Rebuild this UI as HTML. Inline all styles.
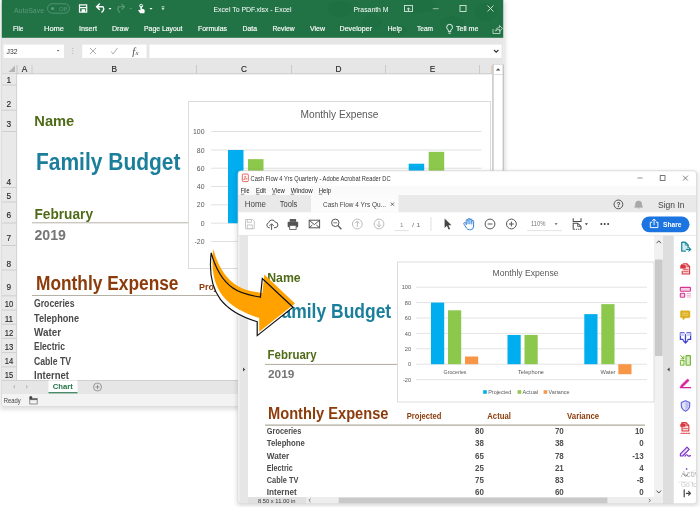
<!DOCTYPE html>
<html><head><meta charset="utf-8"><title>Excel To PDF</title>
<style>
html,body{margin:0;padding:0;background:#fff;}
body{width:700px;height:507px;overflow:hidden;}
svg{display:block;will-change:transform;font-family:"Liberation Sans",sans-serif;}
</style></head><body>
<svg width="700" height="507" viewBox="0 0 700 507">
<defs>
<filter id="sh" x="-5%" y="-5%" width="110%" height="110%"><feGaussianBlur stdDeviation="2.2"/></filter>
</defs>
<rect x="0.5" y="1" width="505.0" height="408.5" fill="#000" opacity="0.13" filter="url(#sh)"/>
<clipPath id="ecl"><rect x="1.5" y="-3" width="502.0" height="409.5" rx="2.5"/></clipPath>
<g clip-path="url(#ecl)">
<rect x="1.5" y="0" width="502.0" height="406.5" fill="#ffffff" />
<rect x="1.5" y="0" width="502.0" height="38" fill="#217346" />
<g fill="#1b6a3e" opacity="0.4"><ellipse cx="340" cy="9" rx="13" ry="8"/><ellipse cx="372" cy="22" rx="10" ry="7"/><ellipse cx="420" cy="6" rx="16" ry="7"/><ellipse cx="452" cy="24" rx="12" ry="8"/><ellipse cx="486" cy="12" rx="11" ry="9"/><ellipse cx="398" cy="30" rx="9" ry="5"/></g>
<text x="14" y="12.5" font-size="7.6" fill="#5c9a78" font-weight="normal" text-anchor="start" textLength="30" lengthAdjust="spacingAndGlyphs" >AutoSave</text>
<rect x="47.5" y="3.8" width="22" height="9.4" rx="4.7" fill="none" stroke="#5c9a78" stroke-width="0.8"/>
<circle cx="52.5" cy="8.5" r="1.6" fill="#5c9a78"/>
<text x="59" y="11" font-size="5.6" fill="#5c9a78" font-weight="normal" text-anchor="start" textLength="8" lengthAdjust="spacingAndGlyphs" >Off</text>
<g stroke="#fff" fill="none" stroke-width="1.2"><rect x="79.5" y="4.9" width="7.2" height="7.2"/><rect x="81.6" y="9.2" width="3.6" height="3" fill="#fff" stroke="none"/><line x1="80" y1="7.6" x2="87" y2="7.6"/></g>
<path d="M97 6.8 L103 6.8 Q105 9.5 101.5 12.6 M99.8 3.6 L96.6 6.8 L99.8 10" stroke="#fff" stroke-width="1.4" fill="none"/>
<path d="M108.5 8 l3 0 l-1.5 1.8z" fill="#fff"/>
<path d="M124 6.8 L118.5 6.8 Q116.5 9.5 120 12.6 M121.6 4 L124.4 6.8 L121.6 9.6" stroke="#5c9a78" stroke-width="1.1" fill="none"/>
<path d="M129.5 8 l2.6 0 l-1.3 1.6z" fill="#5c9a78"/>
<circle cx="141.2" cy="5.8" r="1.5" fill="none" stroke="#fff" stroke-width="0.9"/><path d="M140.4 6 q0.8 -0.6 1.5 0.2 l0 2.6 q3.2 0.4 2.8 2.6 l-0.4 1.8 l-4.2 0 l-2 -3 q1 -0.8 2.3 0.3z" fill="#fff"/>
<path d="M149.5 8 l3 0 l-1.5 1.8z" fill="#fff"/>
<path d="M161.5 8.2 l3 0 l-1.5 1.8z M161.6 6.4 h2.8 v0.9 h-2.8z" fill="#fff"/>
<text x="213.5" y="12.3" font-size="7.3" fill="#fff" font-weight="normal" text-anchor="start" textLength="78" lengthAdjust="spacingAndGlyphs" >Excel To PDF.xlsx  -  Excel</text>
<text x="353.5" y="12.3" font-size="7.3" fill="#fff" font-weight="normal" text-anchor="start" textLength="35" lengthAdjust="spacingAndGlyphs" >Prasanth M</text>
<g stroke="#d7e8dd" fill="none" stroke-width="0.9"><rect x="404.5" y="5.5" width="8" height="6"/><path d="M406.7 9.6 l1.8 -1.8 l1.8 1.8 M408.5 8 v3"/></g>
<line x1="432.8" y1="8.7" x2="438.6" y2="8.7" stroke="#a5c9b4" stroke-width="0.9" />
<rect x="460" y="5.5" width="6" height="6" fill="none" stroke="#d7e8dd" stroke-width="0.9"/>
<path d="M487.5 5.5 l6 6 M493.5 5.5 l-6 6" stroke="#d7e8dd" stroke-width="0.9"/>
<text x="13" y="31.3" font-size="7.4" fill="#fff" font-weight="normal" text-anchor="start" textLength="10.5" lengthAdjust="spacingAndGlyphs" stroke="#fff" stroke-width="0.15">File</text>
<text x="44" y="31.3" font-size="7.4" fill="#fff" font-weight="normal" text-anchor="start" textLength="20" lengthAdjust="spacingAndGlyphs" stroke="#fff" stroke-width="0.15">Home</text>
<text x="79" y="31.3" font-size="7.4" fill="#fff" font-weight="normal" text-anchor="start" textLength="18" lengthAdjust="spacingAndGlyphs" stroke="#fff" stroke-width="0.15">Insert</text>
<text x="112" y="31.3" font-size="7.4" fill="#fff" font-weight="normal" text-anchor="start" textLength="16.5" lengthAdjust="spacingAndGlyphs" stroke="#fff" stroke-width="0.15">Draw</text>
<text x="144" y="31.3" font-size="7.4" fill="#fff" font-weight="normal" text-anchor="start" textLength="38.5" lengthAdjust="spacingAndGlyphs" stroke="#fff" stroke-width="0.15">Page Layout</text>
<text x="198" y="31.3" font-size="7.4" fill="#fff" font-weight="normal" text-anchor="start" textLength="29" lengthAdjust="spacingAndGlyphs" stroke="#fff" stroke-width="0.15">Formulas</text>
<text x="242.5" y="31.3" font-size="7.4" fill="#fff" font-weight="normal" text-anchor="start" textLength="14.5" lengthAdjust="spacingAndGlyphs" stroke="#fff" stroke-width="0.15">Data</text>
<text x="272.5" y="31.3" font-size="7.4" fill="#fff" font-weight="normal" text-anchor="start" textLength="22.0" lengthAdjust="spacingAndGlyphs" stroke="#fff" stroke-width="0.15">Review</text>
<text x="310" y="31.3" font-size="7.4" fill="#fff" font-weight="normal" text-anchor="start" textLength="15" lengthAdjust="spacingAndGlyphs" stroke="#fff" stroke-width="0.15">View</text>
<text x="339.5" y="31.3" font-size="7.4" fill="#fff" font-weight="normal" text-anchor="start" textLength="32.5" lengthAdjust="spacingAndGlyphs" stroke="#fff" stroke-width="0.15">Developer</text>
<text x="387.5" y="31.3" font-size="7.4" fill="#fff" font-weight="normal" text-anchor="start" textLength="14.5" lengthAdjust="spacingAndGlyphs" stroke="#fff" stroke-width="0.15">Help</text>
<text x="417" y="31.3" font-size="7.4" fill="#fff" font-weight="normal" text-anchor="start" textLength="16" lengthAdjust="spacingAndGlyphs" stroke="#fff" stroke-width="0.15">Team</text>
<text x="456" y="31.3" font-size="7.4" fill="#fff" font-weight="normal" text-anchor="start" textLength="22.5" lengthAdjust="spacingAndGlyphs" stroke="#fff" stroke-width="0.15">Tell me</text>
<path d="M448.4 31.6 v-1.4 q-1.7 -1.4 -1.7 -3 a2.9 2.9 0 0 1 5.8 0 q0 1.6 -1.7 3 v1.4z M448.5 33.2 h2.2" stroke="#fff" stroke-width="0.9" fill="none"/>
<path d="M493 29 v4.5 h7 v-3 M495.5 31 q0.5 -3.5 4 -3.6 v-1.9 l3 2.9 l-3 2.9 v-1.9 q-2.5 0 -4 1.6z" stroke="#cfe3d6" stroke-width="0.8" fill="none"/>
<rect x="1.5" y="37.8" width="502.0" height="36.2" fill="#e6e6e6" />
<rect x="3.6" y="44.6" width="60.4" height="13.3" fill="#fff" />
<text x="6.5" y="54" font-size="7.2" fill="#333" font-weight="normal" text-anchor="start" textLength="11" lengthAdjust="spacingAndGlyphs" >J32</text>
<path d="M56.8 50 l2.6 0 l-1.3 1.6z" fill="#555"/>
<rect x="72.3" y="48" width="0.9" height="0.9" fill="#aaa" />
<rect x="72.3" y="50.5" width="0.9" height="0.9" fill="#aaa" />
<rect x="72.3" y="53" width="0.9" height="0.9" fill="#aaa" />
<rect x="82.3" y="44.6" width="64.2" height="13.3" fill="#fff" />
<path d="M90 48 l6 6 M96 48 l-6 6" stroke="#999" stroke-width="0.8"/>
<path d="M111 51.5 l2 2.5 l4.5 -6" stroke="#999" stroke-width="0.8" fill="none"/>
<text x="132.3" y="54.8" font-size="10.4" fill="#4a4a4a" font-weight="normal" text-anchor="start" font-style="italic" font-family="Liberation Serif,serif">f</text>
<text x="135.6" y="55" font-size="6.8" fill="#4a4a4a" font-weight="normal" text-anchor="start" font-style="italic" font-family="Liberation Serif,serif">x</text>
<rect x="149.5" y="44.6" width="352" height="13.3" fill="#fff" />
<path d="M494 50 l2.2 2.2 l2.2 -2.2" stroke="#333" stroke-width="1.1" fill="none"/>
<rect x="1.5" y="62.5" width="502.0" height="11.299999999999997" fill="#e6e6e6" />
<path d="M15 65.5 v6.5 h-6.5z" fill="#b5b5b5"/>
<line x1="1.5" y1="73.8" x2="492.5" y2="73.8" stroke="#c4c4c4" stroke-width="0.8" />
<text x="24.5" y="71.8" font-size="8.3" fill="#222" font-weight="normal" text-anchor="middle" stroke="#222" stroke-width="0.12">A</text>
<line x1="32" y1="65" x2="32" y2="73.8" stroke="#c4c4c4" stroke-width="0.8" />
<text x="114.25" y="71.8" font-size="8.3" fill="#222" font-weight="normal" text-anchor="middle" stroke="#222" stroke-width="0.12">B</text>
<line x1="196.5" y1="65" x2="196.5" y2="73.8" stroke="#c4c4c4" stroke-width="0.8" />
<text x="244.0" y="71.8" font-size="8.3" fill="#222" font-weight="normal" text-anchor="middle" stroke="#222" stroke-width="0.12">C</text>
<line x1="291.5" y1="65" x2="291.5" y2="73.8" stroke="#c4c4c4" stroke-width="0.8" />
<text x="338.5" y="71.8" font-size="8.3" fill="#222" font-weight="normal" text-anchor="middle" stroke="#222" stroke-width="0.12">D</text>
<line x1="385.5" y1="65" x2="385.5" y2="73.8" stroke="#c4c4c4" stroke-width="0.8" />
<text x="432.5" y="71.8" font-size="8.3" fill="#222" font-weight="normal" text-anchor="middle" stroke="#222" stroke-width="0.12">E</text>
<line x1="479.5" y1="65" x2="479.5" y2="73.8" stroke="#c4c4c4" stroke-width="0.8" />
<line x1="17" y1="65" x2="17" y2="73.8" stroke="#b9b9b9" stroke-width="0.8" />
<rect x="491.5" y="66" width="1" height="7.5" fill="#f0b57a" />
<rect x="1.5" y="73.8" width="15" height="306.2" fill="#e9e9e9" />
<line x1="16.6" y1="73.8" x2="16.6" y2="380" stroke="#c6c6c6" stroke-width="0.8" />
<text x="8.9" y="82.8" font-size="8.3" fill="#2a2a2a" font-weight="normal" text-anchor="middle" stroke="#2a2a2a" stroke-width="0.15">1</text>
<line x1="1.5" y1="85" x2="16.6" y2="85" stroke="#c6c6c6" stroke-width="0.8" />
<text x="8.9" y="107.3" font-size="8.3" fill="#2a2a2a" font-weight="normal" text-anchor="middle" stroke="#2a2a2a" stroke-width="0.15">2</text>
<line x1="1.5" y1="110.2" x2="16.6" y2="110.2" stroke="#c6c6c6" stroke-width="0.8" />
<text x="8.9" y="127.1" font-size="8.3" fill="#2a2a2a" font-weight="normal" text-anchor="middle" stroke="#2a2a2a" stroke-width="0.15">3</text>
<line x1="1.5" y1="131.5" x2="16.6" y2="131.5" stroke="#c6c6c6" stroke-width="0.8" />
<text x="8.9" y="185.3" font-size="8.3" fill="#2a2a2a" font-weight="normal" text-anchor="middle" stroke="#2a2a2a" stroke-width="0.15">4</text>
<line x1="1.5" y1="187.5" x2="16.6" y2="187.5" stroke="#c6c6c6" stroke-width="0.8" />
<text x="8.9" y="199" font-size="8.3" fill="#2a2a2a" font-weight="normal" text-anchor="middle" stroke="#2a2a2a" stroke-width="0.15">5</text>
<line x1="1.5" y1="202" x2="16.6" y2="202" stroke="#c6c6c6" stroke-width="0.8" />
<text x="8.9" y="217.8" font-size="8.3" fill="#2a2a2a" font-weight="normal" text-anchor="middle" stroke="#2a2a2a" stroke-width="0.15">6</text>
<line x1="1.5" y1="223" x2="16.6" y2="223" stroke="#c6c6c6" stroke-width="0.8" />
<text x="8.9" y="240.5" font-size="8.3" fill="#2a2a2a" font-weight="normal" text-anchor="middle" stroke="#2a2a2a" stroke-width="0.15">7</text>
<line x1="1.5" y1="245.5" x2="16.6" y2="245.5" stroke="#c6c6c6" stroke-width="0.8" />
<text x="8.9" y="266.9" font-size="8.3" fill="#2a2a2a" font-weight="normal" text-anchor="middle" stroke="#2a2a2a" stroke-width="0.15">8</text>
<line x1="1.5" y1="270" x2="16.6" y2="270" stroke="#c6c6c6" stroke-width="0.8" />
<text x="8.9" y="289.7" font-size="8.3" fill="#2a2a2a" font-weight="normal" text-anchor="middle" stroke="#2a2a2a" stroke-width="0.15">9</text>
<line x1="1.5" y1="295.8" x2="16.6" y2="295.8" stroke="#c6c6c6" stroke-width="0.8" />
<text x="8.9" y="307.4" font-size="8.3" fill="#2a2a2a" font-weight="normal" text-anchor="middle" textLength="8.5" lengthAdjust="spacingAndGlyphs" stroke="#2a2a2a" stroke-width="0.15">10</text>
<line x1="1.5" y1="310" x2="16.6" y2="310" stroke="#c6c6c6" stroke-width="0.8" />
<text x="8.9" y="321.6" font-size="8.3" fill="#2a2a2a" font-weight="normal" text-anchor="middle" textLength="8.5" lengthAdjust="spacingAndGlyphs" stroke="#2a2a2a" stroke-width="0.15">11</text>
<line x1="1.5" y1="324.2" x2="16.6" y2="324.2" stroke="#c6c6c6" stroke-width="0.8" />
<text x="8.9" y="335.8" font-size="8.3" fill="#2a2a2a" font-weight="normal" text-anchor="middle" textLength="8.5" lengthAdjust="spacingAndGlyphs" stroke="#2a2a2a" stroke-width="0.15">12</text>
<line x1="1.5" y1="338.4" x2="16.6" y2="338.4" stroke="#c6c6c6" stroke-width="0.8" />
<text x="8.9" y="350.2" font-size="8.3" fill="#2a2a2a" font-weight="normal" text-anchor="middle" textLength="8.5" lengthAdjust="spacingAndGlyphs" stroke="#2a2a2a" stroke-width="0.15">13</text>
<line x1="1.5" y1="352.6" x2="16.6" y2="352.6" stroke="#c6c6c6" stroke-width="0.8" />
<text x="8.9" y="364.2" font-size="8.3" fill="#2a2a2a" font-weight="normal" text-anchor="middle" textLength="8.5" lengthAdjust="spacingAndGlyphs" stroke="#2a2a2a" stroke-width="0.15">14</text>
<line x1="1.5" y1="366.8" x2="16.6" y2="366.8" stroke="#c6c6c6" stroke-width="0.8" />
<text x="8.9" y="378.4" font-size="8.3" fill="#2a2a2a" font-weight="normal" text-anchor="middle" textLength="8.5" lengthAdjust="spacingAndGlyphs" stroke="#2a2a2a" stroke-width="0.15">15</text>
<text x="34.3" y="126.4" font-size="14.4" fill="#4f6b17" font-weight="bold" text-anchor="start" textLength="40" lengthAdjust="spacingAndGlyphs" >Name</text>
<text x="36" y="169.5" font-size="24.5" fill="#1b7f9c" font-weight="bold" text-anchor="start" textLength="144.5" lengthAdjust="spacingAndGlyphs" >Family Budget</text>
<text x="34.5" y="218.6" font-size="14.6" fill="#4f6b17" font-weight="bold" text-anchor="start" textLength="58.5" lengthAdjust="spacingAndGlyphs" >February</text>
<line x1="32" y1="222.8" x2="196" y2="222.8" stroke="#b5b1a4" stroke-width="1" />
<text x="34.5" y="239.6" font-size="14.4" fill="#757575" font-weight="bold" text-anchor="start" textLength="31.5" lengthAdjust="spacingAndGlyphs" >2019</text>
<text x="36" y="290" font-size="19.4" fill="#8c3b0b" font-weight="bold" text-anchor="start" textLength="142.5" lengthAdjust="spacingAndGlyphs" >Monthly Expense</text>
<line x1="32" y1="295.5" x2="222" y2="295.5" stroke="#b5b1a4" stroke-width="1" />
<text x="199" y="290.2" font-size="9.2" fill="#8c3b0b" font-weight="bold" text-anchor="start" textLength="17.5" lengthAdjust="spacingAndGlyphs" >Proj</text>
<text x="34" y="307.4" font-size="10.1" fill="#4a4a4a" font-weight="bold" text-anchor="start" textLength="40.5" lengthAdjust="spacingAndGlyphs" >Groceries</text>
<text x="34" y="321.75" font-size="10.1" fill="#4a4a4a" font-weight="bold" text-anchor="start" textLength="45" lengthAdjust="spacingAndGlyphs" >Telephone</text>
<text x="34" y="336.09999999999997" font-size="10.1" fill="#4a4a4a" font-weight="bold" text-anchor="start" textLength="27" lengthAdjust="spacingAndGlyphs" >Water</text>
<text x="34" y="350.45" font-size="10.1" fill="#4a4a4a" font-weight="bold" text-anchor="start" textLength="31" lengthAdjust="spacingAndGlyphs" >Electric</text>
<text x="34" y="364.79999999999995" font-size="10.1" fill="#4a4a4a" font-weight="bold" text-anchor="start" textLength="37" lengthAdjust="spacingAndGlyphs" >Cable TV</text>
<text x="34" y="379.15" font-size="10.1" fill="#4a4a4a" font-weight="bold" text-anchor="start" textLength="35" lengthAdjust="spacingAndGlyphs" >Internet</text>
<rect x="188.5" y="101.5" width="302.0" height="167.0" fill="#fff" stroke="#d9d9d9" stroke-width="0.9"/>
<text x="339.5" y="118" font-size="10.6" fill="#595959" font-weight="normal" text-anchor="middle" textLength="78" lengthAdjust="spacingAndGlyphs" >Monthly Expense</text>
<line x1="211" y1="131.5" x2="481.5" y2="131.5" stroke="#d9d9d9" stroke-width="0.8" />
<text x="204.5" y="134.1" font-size="6.9" fill="#595959" font-weight="normal" text-anchor="end" >100</text>
<line x1="211" y1="150" x2="481.5" y2="150" stroke="#d9d9d9" stroke-width="0.8" />
<text x="204.5" y="152.6" font-size="6.9" fill="#595959" font-weight="normal" text-anchor="end" >80</text>
<line x1="211" y1="168.2" x2="481.5" y2="168.2" stroke="#d9d9d9" stroke-width="0.8" />
<text x="204.5" y="170.79999999999998" font-size="6.9" fill="#595959" font-weight="normal" text-anchor="end" >60</text>
<line x1="211" y1="186.5" x2="481.5" y2="186.5" stroke="#d9d9d9" stroke-width="0.8" />
<text x="204.5" y="189.1" font-size="6.9" fill="#595959" font-weight="normal" text-anchor="end" >40</text>
<line x1="211" y1="204.8" x2="481.5" y2="204.8" stroke="#d9d9d9" stroke-width="0.8" />
<text x="204.5" y="207.4" font-size="6.9" fill="#595959" font-weight="normal" text-anchor="end" >20</text>
<line x1="211" y1="223.2" x2="481.5" y2="223.2" stroke="#d9d9d9" stroke-width="0.8" />
<text x="204.5" y="225.79999999999998" font-size="6.9" fill="#595959" font-weight="normal" text-anchor="end" >0</text>
<line x1="211" y1="241.5" x2="481.5" y2="241.5" stroke="#d9d9d9" stroke-width="0.8" />
<text x="204.5" y="244.1" font-size="6.9" fill="#595959" font-weight="normal" text-anchor="end" >-20</text>
<rect x="228" y="150.0" width="15.5" height="73.19999999999999" fill="#00adee" />
<rect x="248" y="159.14999999999998" width="15.5" height="64.05000000000001" fill="#8cc84b" />
<rect x="408.7" y="163.725" width="15.5" height="59.474999999999994" fill="#00adee" />
<rect x="428.7" y="151.82999999999998" width="15.5" height="71.37" fill="#8cc84b" />
<rect x="492.2" y="64.4" width="11.3" height="316" fill="#fff" />
<rect x="492.3" y="64.4" width="1.3" height="316" fill="#bebebe" />
<rect x="493.6" y="64.4" width="9.6" height="10" fill="#fff" stroke="#d0d0d0" stroke-width="0.7"/>
<path d="M495.9 70.6 l2.2 -2.4 l2.2 2.4z" fill="#444"/>
<rect x="1.5" y="380.5" width="502.0" height="13.5" fill="#e6e6e6" />
<line x1="1.5" y1="380.5" x2="503.5" y2="380.5" stroke="#c6c6c6" stroke-width="0.8" />
<path d="M15 384.5 l-2 2.2 l2 2.2z M26 384.5 l2 2.2 l-2 2.2z" fill="#c0c0c0"/>
<rect x="48.5" y="380.5" width="29" height="12" fill="#fff" />
<rect x="48.5" y="392.2" width="29" height="1.1" fill="#217346" />
<text x="52.8" y="389.2" font-size="7.8" fill="#217346" font-weight="bold" text-anchor="start" textLength="20" lengthAdjust="spacingAndGlyphs" >Chart</text>
<circle cx="97.5" cy="387" r="4" fill="none" stroke="#777" stroke-width="0.7"/><path d="M95.3 387 h4.4 M97.5 384.8 v4.4" stroke="#777" stroke-width="0.7"/>
<rect x="1.5" y="394" width="502.0" height="12.5" fill="#f3f3f3" />
<text x="3.8" y="403.2" font-size="6.6" fill="#444" font-weight="normal" text-anchor="start" textLength="17" lengthAdjust="spacingAndGlyphs" >Ready</text>
<rect x="29.8" y="398.5" width="7.4" height="5.5" fill="none" stroke="#666" stroke-width="0.7"/><rect x="29.8" y="398.5" width="7.4" height="1.6" fill="#666"/><circle cx="30.8" cy="397.5" r="1.5" fill="#444"/>
</g>
<path d="M1.5 37.8 V404.0 q0 2.5 2.5 2.5 H501.0 q2.5 0 2.5 -2.5" fill="none" stroke="#dcdcdc" stroke-width="0.9"/>
<path d="M503.3 64.4 V380.5" fill="none" stroke="#c2c2c2" stroke-width="1.3"/>
<rect x="236.5" y="171.3" width="462.1" height="335.0" rx="3" fill="#000" opacity="0.12" filter="url(#sh)"/>
<clipPath id="acl"><rect x="238" y="170.8" width="458.6" height="333.0" rx="3.2"/></clipPath>
<g clip-path="url(#acl)">
<rect x="238" y="170.8" width="458.6" height="333.0" fill="#fff" />
<g><rect x="242.3" y="174" width="6" height="7.6" rx="1" fill="#fff" stroke="#e0403a" stroke-width="0.8"/><path d="M243.6 179.8 q1.6 -2.4 1.6 -4 q0 1.8 1.8 3.2 q-1.8 -0.2 -3.4 0.8z" fill="none" stroke="#e0403a" stroke-width="0.6"/></g>
<text x="250.6" y="180.9" font-size="6.3" fill="#333" font-weight="normal" text-anchor="start" textLength="140" lengthAdjust="spacingAndGlyphs" >Cash Flow 4 Yrs Quarterly - Adobe Acrobat Reader DC</text>
<line x1="637.5" y1="178" x2="642.5" y2="178" stroke="#888" stroke-width="0.9" />
<rect x="660.2" y="175.6" width="4.8" height="4.8" fill="none" stroke="#555" stroke-width="0.8"/>
<path d="M683 175.7 l4.9 4.9 M687.9 175.7 l-4.9 4.9" stroke="#5a5a5a" stroke-width="0.75"/>
<rect x="238" y="185.6" width="458.6" height="9.6" fill="#fafafa" />
<text x="240.8" y="192.9" font-size="6.3" fill="#222" font-weight="normal" text-anchor="start" textLength="8.599999999999994" lengthAdjust="spacingAndGlyphs" >File</text>
<line x1="240.8" y1="194.2" x2="244.3" y2="194.2" stroke="#222" stroke-width="0.5" />
<text x="255.9" y="192.9" font-size="6.3" fill="#222" font-weight="normal" text-anchor="start" textLength="10.099999999999994" lengthAdjust="spacingAndGlyphs" >Edit</text>
<line x1="255.9" y1="194.2" x2="259.4" y2="194.2" stroke="#222" stroke-width="0.5" />
<text x="272" y="192.9" font-size="6.3" fill="#222" font-weight="normal" text-anchor="start" textLength="12.699999999999989" lengthAdjust="spacingAndGlyphs" >View</text>
<line x1="272" y1="194.2" x2="275.5" y2="194.2" stroke="#222" stroke-width="0.5" />
<text x="290.7" y="192.9" font-size="6.3" fill="#222" font-weight="normal" text-anchor="start" textLength="22.0" lengthAdjust="spacingAndGlyphs" >Window</text>
<line x1="290.7" y1="194.2" x2="294.2" y2="194.2" stroke="#222" stroke-width="0.5" />
<text x="318.8" y="192.9" font-size="6.3" fill="#222" font-weight="normal" text-anchor="start" textLength="12.199999999999989" lengthAdjust="spacingAndGlyphs" >Help</text>
<line x1="318.8" y1="194.2" x2="322.3" y2="194.2" stroke="#222" stroke-width="0.5" />
<rect x="238" y="195" width="458.6" height="17.5" fill="#e9e9e9" />
<rect x="311" y="195" width="87.5" height="17.5" fill="#fbfbfb" />
<text x="244.7" y="206.7" font-size="8.4" fill="#444" font-weight="normal" text-anchor="start" textLength="21.3" lengthAdjust="spacingAndGlyphs" >Home</text>
<text x="279.7" y="206.7" font-size="8.4" fill="#444" font-weight="normal" text-anchor="start" textLength="17.7" lengthAdjust="spacingAndGlyphs" >Tools</text>
<text x="323" y="206.7" font-size="7.4" fill="#444" font-weight="normal" text-anchor="start" textLength="63" lengthAdjust="spacingAndGlyphs" >Cash Flow 4 Yrs Qu...</text>
<path d="M390.8 202.6 l3.2 3.2 M394 202.6 l-3.2 3.2" stroke="#444" stroke-width="0.8"/>
<circle cx="618.4" cy="204.4" r="4.4" fill="none" stroke="#444" stroke-width="0.9"/>
<text x="618.4" y="206.8" font-size="6.6" fill="#444" font-weight="bold" text-anchor="middle" >?</text>
<path d="M634.6 207.2 q1 -0.6 1 -3.2 a3 3 0 0 1 6 0 q0 2.6 1 3.2z M637.6 208 h2" fill="#a8a8a8" stroke="#a8a8a8" stroke-width="0.7"/>
<text x="658" y="207.6" font-size="8.2" fill="#444" font-weight="normal" text-anchor="start" textLength="26.5" lengthAdjust="spacingAndGlyphs" >Sign In</text>
<rect x="238" y="212.5" width="458.6" height="22.7" fill="#fff" />
<line x1="238" y1="235.4" x2="696.6" y2="235.4" stroke="#e2e2e2" stroke-width="0.9" />
<g stroke="#c2c2c2" stroke-width="0.9" fill="none"><path d="M245.5 219.5 h7 l1.8 1.8 v7.4 h-8.8z"/><rect x="247.3" y="219.5" width="4" height="2.8"/><rect x="247.3" y="225" width="5" height="3.7"/></g>
<g transform="translate(271.6 225) scale(0.9) translate(-271.6 -225)" stroke="#555" stroke-width="1.1" fill="none"><path d="M269.6 228 h-1 a2.9 2.9 0 0 1 -0.2 -5.6 a3.8 3.8 0 0 1 7.2 -0.6 a3.1 3.1 0 0 1 -0.2 6.2 h-1.2"/><path d="M271.6 230.5 v-6.4 M269.2 226 l2.4 -2.4 l2.4 2.4"/></g>
<g transform="translate(293 224.4) scale(0.92) translate(-293 -224.4)" fill="#555"><rect x="289.4" y="218.6" width="7" height="3"/><rect x="287.2" y="221.4" width="11.4" height="6" rx="1"/><rect x="289.4" y="225.4" width="7" height="4.6" fill="#fff" stroke="#555" stroke-width="0.9"/></g>
<g stroke="#555" stroke-width="1" fill="none"><rect x="309.2" y="220.2" width="10.4" height="7.6"/><path d="M309.2 220.2 l5.2 4.4 l5.2 -4.4 M309.2 227.8 l3.2 -2.8 M319.6 227.8 l-3.2 -2.8"/></g>
<g stroke="#555" stroke-width="1" fill="none"><circle cx="335.3" cy="222.8" r="3.7"/><path d="M338 225.6 l3.4 3.6" stroke-width="1.3"/><path d="M333.4 222.8 h3.8" stroke-width="0.8"/></g>
<g stroke="#b4b4b4" stroke-width="0.9" fill="none"><circle cx="357.3" cy="224" r="4.9"/><path d="M357.3 227 v-5.8 M355 223.4 l2.3 -2.3 l2.3 2.3"/><circle cx="379" cy="224" r="4.9"/><path d="M379 221 v5.8 M376.7 224.6 l2.3 2.3 l2.3 -2.3"/></g>
<text x="401.7" y="226.6" font-size="6.2" fill="#888" font-weight="normal" text-anchor="middle" >1</text>
<line x1="394.5" y1="230.6" x2="409" y2="230.6" stroke="#d8d8d8" stroke-width="0.8" />
<text x="412" y="226.6" font-size="6.2" fill="#777" font-weight="normal" text-anchor="start" textLength="8.5" lengthAdjust="spacingAndGlyphs" >/  1</text>
<line x1="431" y1="217" x2="431" y2="231" stroke="#dcdcdc" stroke-width="0.9" />
<path d="M444.6 218.4 v9.6 l2.3 -2.2 l1.7 3.8 l1.5 -0.7 l-1.7 -3.7 h3.1z" fill="#444"/>
<g stroke="#2a7bd3" stroke-width="0.95" fill="none" stroke-linecap="round" stroke-linejoin="round"><path d="M466.2 224.6 L466.2 220.4 a0.9 0.9 0 0 1 1.8 0 L468 219.4 a0.95 0.95 0 0 1 1.9 0 L469.9 219.9 a0.95 0.95 0 0 1 1.9 0 L471.8 221.3 a0.9 0.9 0 0 1 1.8 0 L473.6 226 Q473.6 229.8 470.4 229.8 L469.4 229.8 Q467.6 229.8 466.4 228 L464 224.2 Q463.4 223 464.3 222.6 Q465.2 222.3 466.2 223.6"/><path d="M468 220.4 V223.8 M469.9 220 V223.8 M471.8 221.3 V224"/></g>
<g stroke="#555" stroke-width="1" fill="none"><circle cx="490" cy="224" r="4.9"/><path d="M487.6 224 h4.8"/><circle cx="511.4" cy="224" r="4.9"/><path d="M509 224 h4.8 M511.4 221.6 v4.8"/></g>
<text x="531" y="226.4" font-size="6.4" fill="#777" font-weight="normal" text-anchor="start" textLength="14.5" lengthAdjust="spacingAndGlyphs" >110%</text>
<line x1="527" y1="230.6" x2="562" y2="230.6" stroke="#dcdcdc" stroke-width="0.8" />
<path d="M554.6 223.2 h3 l-1.5 1.9z" fill="#555"/>
<g stroke="#4a4a4a" stroke-width="1.05" fill="none"><path d="M573.2 218.2 v3.4 h7.8 v-3.4"/><path d="M573.2 229.6 v-6.4 h4.4 l3.4 3.2 v3.2"/><path d="M577.6 223.2 v3.2 h3.4" stroke-width="0.8"/><path d="M573.6 229.2 h7.4" stroke-dasharray="1.3 0.9"/></g>
<path d="M584.8 223.3 h3.2 l-1.6 2z" fill="#444"/>
<circle cx="601.3" cy="223.9" r="1" fill="#3c3c3c"/>
<circle cx="604.7" cy="223.9" r="1" fill="#3c3c3c"/>
<circle cx="608.1" cy="223.9" r="1" fill="#3c3c3c"/>
<rect x="641.5" y="216.4" width="48" height="15.8" rx="7.9" fill="#1b74e0"/>
<g stroke="#fff" stroke-width="0.95" fill="none"><path d="M652.3 222.2 h-2 v5.4 h7.6 v-5.4 h-2"/><path d="M654.1 225.2 v-6 M652.3 220.8 l1.8 -1.8 l1.8 1.8"/></g>
<text x="663" y="227" font-size="7.6" fill="#fff" font-weight="bold" text-anchor="start" textLength="18.5" lengthAdjust="spacingAndGlyphs" >Share</text>
<rect x="238" y="235.8" width="458.6" height="268.0" fill="#e3e3e3" />
<rect x="238" y="235.8" width="10" height="268.0" fill="#e6e6e6" />
<rect x="238" y="235.8" width="1.2" height="268.0" fill="#fff" />
<path d="M243 367.6 l2.2 1.9 l-2.2 1.9z" fill="#444"/>
<rect x="248" y="235.8" width="406.6" height="261.5" fill="#fff" />
<rect x="654.6" y="235.8" width="8.4" height="261.5" fill="#f1f1f1" />
<rect x="655" y="259.6" width="7.6" height="96.4" fill="#c9c9c9" />
<path d="M656.6 243.2 l2.2 -2.4 l2.2 2.4" stroke="#444" stroke-width="0.9" fill="none"/>
<path d="M656.6 490.6 l2.2 2.4 l2.2 -2.4" stroke="#444" stroke-width="0.9" fill="none"/>
<rect x="663" y="235.8" width="10.8" height="268.0" fill="#dedede" />
<path d="M669.6 367.6 l-2.4 2 l2.4 2z" fill="#444"/>
<rect x="673.8" y="235.8" width="22.800000000000068" height="268.0" fill="#fff" />
<rect x="248" y="497.2" width="415" height="6.6" fill="#eeeeee" />
<rect x="248" y="497.2" width="58" height="6.6" fill="#e0e0e0" />
<text x="258" y="502.6" font-size="5.9" fill="#333" font-weight="normal" text-anchor="start" textLength="37.5" lengthAdjust="spacingAndGlyphs" >8.50 x 11.00 in</text>
<path d="M310.6 498.8 l-1.7 1.6 l1.7 1.6" stroke="#444" stroke-width="0.7" fill="none"/>
<rect x="338.7" y="497.6" width="268.7" height="5.8" fill="#c9c9c9" />
<path d="M648.8 498.8 l1.7 1.6 l-1.7 1.6" stroke="#444" stroke-width="0.7" fill="none"/>
<text x="267.2" y="282.4" font-size="12" fill="#4f6b17" font-weight="bold" text-anchor="start" textLength="33.5" lengthAdjust="spacingAndGlyphs" >Name</text>
<text x="270.8" y="317.6" font-size="19.4" fill="#1b7f9c" font-weight="bold" text-anchor="start" textLength="120.4" lengthAdjust="spacingAndGlyphs" >Family Budget</text>
<text x="267.6" y="358.5" font-size="12.2" fill="#4f6b17" font-weight="bold" text-anchor="start" textLength="49" lengthAdjust="spacingAndGlyphs" >February</text>
<line x1="265" y1="364.4" x2="397" y2="364.4" stroke="#b0aa9c" stroke-width="1" />
<text x="268" y="377.6" font-size="11.8" fill="#757575" font-weight="bold" text-anchor="start" textLength="26.3" lengthAdjust="spacingAndGlyphs" >2019</text>
<text x="268" y="419" font-size="15.6" fill="#8c3b0b" font-weight="bold" text-anchor="start" textLength="120.5" lengthAdjust="spacingAndGlyphs" >Monthly Expense</text>
<line x1="265" y1="425.2" x2="645" y2="425.2" stroke="#b0aa9c" stroke-width="1.2" />
<text x="406.8" y="419.2" font-size="8.6" fill="#8c3b0b" font-weight="bold" text-anchor="start" textLength="34.5" lengthAdjust="spacingAndGlyphs" >Projected</text>
<text x="487.3" y="419.2" font-size="8.6" fill="#8c3b0b" font-weight="bold" text-anchor="start" textLength="23.5" lengthAdjust="spacingAndGlyphs" >Actual</text>
<text x="567.1" y="419.2" font-size="8.6" fill="#8c3b0b" font-weight="bold" text-anchor="start" textLength="32" lengthAdjust="spacingAndGlyphs" >Variance</text>
<text x="266.8" y="434.4" font-size="8.6" fill="#4a4a4a" font-weight="bold" text-anchor="start" textLength="34.5" lengthAdjust="spacingAndGlyphs" >Groceries</text>
<text x="475.1" y="434.4" font-size="8.8" fill="#505050" font-weight="bold" text-anchor="start" textLength="8.9" lengthAdjust="spacingAndGlyphs" >80</text>
<text x="554.9" y="434.4" font-size="8.8" fill="#505050" font-weight="bold" text-anchor="start" textLength="8.9" lengthAdjust="spacingAndGlyphs" >70</text>
<text x="634.9" y="434.4" font-size="8.8" fill="#505050" font-weight="bold" text-anchor="start" textLength="8.9" lengthAdjust="spacingAndGlyphs" >10</text>
<text x="266.8" y="446.45" font-size="8.6" fill="#4a4a4a" font-weight="bold" text-anchor="start" textLength="38" lengthAdjust="spacingAndGlyphs" >Telephone</text>
<text x="475.1" y="446.45" font-size="8.8" fill="#505050" font-weight="bold" text-anchor="start" textLength="8.9" lengthAdjust="spacingAndGlyphs" >38</text>
<text x="554.9" y="446.45" font-size="8.8" fill="#505050" font-weight="bold" text-anchor="start" textLength="8.9" lengthAdjust="spacingAndGlyphs" >38</text>
<text x="639.3499999999999" y="446.45" font-size="8.8" fill="#505050" font-weight="bold" text-anchor="start" textLength="4.45" lengthAdjust="spacingAndGlyphs" >0</text>
<text x="266.8" y="458.5" font-size="8.6" fill="#4a4a4a" font-weight="bold" text-anchor="start" textLength="22.5" lengthAdjust="spacingAndGlyphs" >Water</text>
<text x="475.1" y="458.5" font-size="8.8" fill="#505050" font-weight="bold" text-anchor="start" textLength="8.9" lengthAdjust="spacingAndGlyphs" >65</text>
<text x="554.9" y="458.5" font-size="8.8" fill="#505050" font-weight="bold" text-anchor="start" textLength="8.9" lengthAdjust="spacingAndGlyphs" >78</text>
<text x="632.1999999999999" y="458.5" font-size="8.8" fill="#505050" font-weight="bold" text-anchor="start" textLength="11.6" lengthAdjust="spacingAndGlyphs" >-13</text>
<text x="266.8" y="470.54999999999995" font-size="8.6" fill="#4a4a4a" font-weight="bold" text-anchor="start" textLength="26" lengthAdjust="spacingAndGlyphs" >Electric</text>
<text x="475.1" y="470.54999999999995" font-size="8.8" fill="#505050" font-weight="bold" text-anchor="start" textLength="8.9" lengthAdjust="spacingAndGlyphs" >25</text>
<text x="554.9" y="470.54999999999995" font-size="8.8" fill="#505050" font-weight="bold" text-anchor="start" textLength="8.9" lengthAdjust="spacingAndGlyphs" >21</text>
<text x="639.3499999999999" y="470.54999999999995" font-size="8.8" fill="#505050" font-weight="bold" text-anchor="start" textLength="4.45" lengthAdjust="spacingAndGlyphs" >4</text>
<text x="266.8" y="482.59999999999997" font-size="8.6" fill="#4a4a4a" font-weight="bold" text-anchor="start" textLength="31.5" lengthAdjust="spacingAndGlyphs" >Cable TV</text>
<text x="475.1" y="482.59999999999997" font-size="8.8" fill="#505050" font-weight="bold" text-anchor="start" textLength="8.9" lengthAdjust="spacingAndGlyphs" >75</text>
<text x="554.9" y="482.59999999999997" font-size="8.8" fill="#505050" font-weight="bold" text-anchor="start" textLength="8.9" lengthAdjust="spacingAndGlyphs" >83</text>
<text x="636.65" y="482.59999999999997" font-size="8.8" fill="#505050" font-weight="bold" text-anchor="start" textLength="7.15" lengthAdjust="spacingAndGlyphs" >-8</text>
<text x="266.8" y="494.65" font-size="8.6" fill="#4a4a4a" font-weight="bold" text-anchor="start" textLength="30" lengthAdjust="spacingAndGlyphs" >Internet</text>
<text x="475.1" y="494.65" font-size="8.8" fill="#505050" font-weight="bold" text-anchor="start" textLength="8.9" lengthAdjust="spacingAndGlyphs" >60</text>
<text x="554.9" y="494.65" font-size="8.8" fill="#505050" font-weight="bold" text-anchor="start" textLength="8.9" lengthAdjust="spacingAndGlyphs" >60</text>
<text x="639.3499999999999" y="494.65" font-size="8.8" fill="#505050" font-weight="bold" text-anchor="start" textLength="4.45" lengthAdjust="spacingAndGlyphs" >0</text>
<rect x="397.5" y="262" width="256.5" height="140" fill="#fff" stroke="#d9d9d9" stroke-width="0.9"/>
<text x="525.5" y="276" font-size="8.8" fill="#595959" font-weight="normal" text-anchor="middle" textLength="66" lengthAdjust="spacingAndGlyphs" >Monthly Expense</text>
<line x1="416" y1="287.2" x2="647" y2="287.2" stroke="#d9d9d9" stroke-width="0.7" />
<text x="411" y="289.3" font-size="5.6" fill="#595959" font-weight="normal" text-anchor="end" >100</text>
<line x1="416" y1="302.59999999999997" x2="647" y2="302.59999999999997" stroke="#d9d9d9" stroke-width="0.7" />
<text x="411" y="304.7" font-size="5.6" fill="#595959" font-weight="normal" text-anchor="end" >80</text>
<line x1="416" y1="318.0" x2="647" y2="318.0" stroke="#d9d9d9" stroke-width="0.7" />
<text x="411" y="320.1" font-size="5.6" fill="#595959" font-weight="normal" text-anchor="end" >60</text>
<line x1="416" y1="333.4" x2="647" y2="333.4" stroke="#d9d9d9" stroke-width="0.7" />
<text x="411" y="335.5" font-size="5.6" fill="#595959" font-weight="normal" text-anchor="end" >40</text>
<line x1="416" y1="348.8" x2="647" y2="348.8" stroke="#d9d9d9" stroke-width="0.7" />
<text x="411" y="350.90000000000003" font-size="5.6" fill="#595959" font-weight="normal" text-anchor="end" >20</text>
<line x1="416" y1="364.2" x2="647" y2="364.2" stroke="#d9d9d9" stroke-width="0.7" />
<text x="411" y="366.3" font-size="5.6" fill="#595959" font-weight="normal" text-anchor="end" >0</text>
<line x1="416" y1="379.59999999999997" x2="647" y2="379.59999999999997" stroke="#d9d9d9" stroke-width="0.7" />
<text x="411" y="381.7" font-size="5.6" fill="#595959" font-weight="normal" text-anchor="end" >-20</text>
<rect x="431" y="302.59999999999997" width="13.2" height="61.60000000000002" fill="#00adee" />
<rect x="448" y="310.3" width="13.2" height="53.89999999999998" fill="#8cc84b" />
<rect x="465" y="356.5" width="13.2" height="7.699999999999989" fill="#f79646" />
<rect x="507.5" y="334.94" width="13.2" height="29.25999999999999" fill="#00adee" />
<rect x="524.5" y="334.94" width="13.2" height="29.25999999999999" fill="#8cc84b" />
<rect x="541.5" y="364.2" width="13.2" height="0.0" fill="#f79646" />
<rect x="584.3" y="314.15" width="13.2" height="50.05000000000001" fill="#00adee" />
<rect x="601.3" y="304.14" width="13.2" height="60.06" fill="#8cc84b" />
<rect x="618.3" y="364.2" width="13.2" height="10.009999999999991" fill="#f79646" />
<text x="455" y="374.4" font-size="5.7" fill="#595959" font-weight="normal" text-anchor="middle" textLength="23" lengthAdjust="spacingAndGlyphs" >Groceries</text>
<text x="531" y="374.4" font-size="5.7" fill="#595959" font-weight="normal" text-anchor="middle" textLength="26" lengthAdjust="spacingAndGlyphs" >Telephone</text>
<text x="608" y="374.4" font-size="5.7" fill="#595959" font-weight="normal" text-anchor="middle" textLength="15" lengthAdjust="spacingAndGlyphs" >Water</text>
<rect x="483.2" y="390.2" width="3.6" height="3.6" fill="#00adee" />
<text x="488.2" y="394.2" font-size="5.7" fill="#595959" font-weight="normal" text-anchor="start" textLength="23" lengthAdjust="spacingAndGlyphs" >Projected</text>
<rect x="517.6" y="390.2" width="3.6" height="3.6" fill="#8cc84b" />
<text x="522.6" y="394.2" font-size="5.7" fill="#595959" font-weight="normal" text-anchor="start" textLength="15.5" lengthAdjust="spacingAndGlyphs" >Actual</text>
<rect x="543.6" y="390.2" width="3.6" height="3.6" fill="#f79646" />
<text x="548.6" y="394.2" font-size="5.7" fill="#595959" font-weight="normal" text-anchor="start" textLength="21" lengthAdjust="spacingAndGlyphs" >Variance</text>
<path d="M681.8 242.4 h3.6 l2.6 2.6 v2.2 M681.8 242.4 v8.6 h3.4" stroke="#1b8a9e" stroke-width="1.1" fill="none" stroke-linejoin="round" stroke-linecap="round" />
<path d="M681.8 242.4 h3.6 l2.6 2.6 v6 h-6.2z" stroke="none" stroke-width="0" fill="#d3ebef" stroke-linejoin="round" stroke-linecap="round" />
<path d="M681.8 242.4 h3.6 l2.6 2.6 v2.4 M681.8 242.4 v8.6 h3.6" stroke="#1b8a9e" stroke-width="1.1" fill="none" stroke-linejoin="round" stroke-linecap="round" />
<path d="M685.4 242.6 v2.6 h2.4" stroke="#1b8a9e" stroke-width="0.8" fill="none" stroke-linejoin="round" stroke-linecap="round" />
<path d="M686.4 249.3 h4 M688.8 247.4 l1.9 1.9 l-1.9 1.9" stroke="#1b8a9e" stroke-width="1.2" fill="none" stroke-linejoin="round" stroke-linecap="round" />
<path d="M683 263.8 h4 l2.6 2.6 v7.6 h-7.4 v-3.4" stroke="none" stroke-width="0" fill="#f7d4d6" stroke-linejoin="round" stroke-linecap="round" />
<path d="M683.4 263.8 h3.6 l2.6 2.6 v7.6 h-7.4 v-2.6" stroke="#d9363e" stroke-width="1.1" fill="none" stroke-linejoin="round" stroke-linecap="round" />
<path d="M687 264 v2.6 h2.4" stroke="#d9363e" stroke-width="0.8" fill="none" stroke-linejoin="round" stroke-linecap="round" />
<path d="M680.6 266 a1.7 1.7 0 0 1 3 -1 a1.5 1.5 0 0 1 2 1.6 v1.6 h-5z" stroke="#d9363e" stroke-width="0.6" fill="#d9363e" stroke-linejoin="round" stroke-linecap="round" />
<path d="M683.6 269.6 h4.4 M683.6 271.6 h4.4" stroke="#d9363e" stroke-width="0.7" fill="none" stroke-linejoin="round" stroke-linecap="round" />
<rect x="680.3" y="287.4" width="10.2" height="3.8" rx="0.8" fill="#f5cfe3" stroke="#d83790" stroke-width="1.1"/>
<rect x="680.3" y="293.2" width="4.4" height="4" rx="0.8" fill="#f5cfe3" stroke="#d83790" stroke-width="1.1"/>
<path d="M687 293.6 h3.6 M687 295.3 h3.6 M687 297 h3.6" stroke="#e58fc0" stroke-width="0.7" fill="none" stroke-linejoin="round" stroke-linecap="round" />
<path d="M681.4 310.8 h7.6 q1 0 1 1 v5 q0 1 -1 1 h-3.6 l-2.4 2.2 v-2.2 h-1.6 q-1 0 -1 -1 v-5 q0 -1 1 -1z" stroke="#dcae1d" stroke-width="0.4" fill="#dcae1d" stroke-linejoin="round" stroke-linecap="round" />
<path d="M682.6 313.2 h5.4 M682.6 315.2 h5.4" stroke="#f3dc8c" stroke-width="0.8" fill="none" stroke-linejoin="round" stroke-linecap="round" />
<path d="M684 333 h-3.6 v6.4 h2.6 M687 333 h3.6 v6.4 h-2.6" stroke="#3f43d3" stroke-width="1.3" fill="none" stroke-linejoin="round" stroke-linecap="round" />
<path d="M680.4 333 h3.6 v3 h-3.6z M687 333 h3.6 v3 h-3.6z" stroke="none" stroke-width="0" fill="#cfd0f5" stroke-linejoin="round" stroke-linecap="round" />
<path d="M685.5 334.6 v8 M683.2 340.6 l2.3 2.4 l2.3 -2.4" stroke="#3f43d3" stroke-width="1.3" fill="none" stroke-linejoin="round" stroke-linecap="round" />
<rect x="686" y="355.6" width="4.4" height="9.6" rx="0.5" fill="#d9edc4" stroke="#6fb52c" stroke-width="1.1"/>
<path d="M684 360.4 v4.8 h-3.6 v-4.8z" stroke="#6fb52c" stroke-width="1.0" fill="#e9f4dc" stroke-linejoin="round" stroke-linecap="round" stroke-dasharray="1.6 0.9"/>
<path d="M680.6 355.6 l3 3 M683.8 356.2 v2.6 h-2.6" stroke="#6fb52c" stroke-width="1.0" fill="none" stroke-linejoin="round" stroke-linecap="round" />
<path d="M681 385.4 l6.6 -6.4 l1.5 1.5 l-6.6 6.4 h-1.5z" stroke="#d6249f" stroke-width="0.7" fill="#d6249f" stroke-linejoin="round" stroke-linecap="round" />
<path d="M680.2 387.6 h10.4" stroke="#d6249f" stroke-width="1.2" fill="none" stroke-linejoin="round" stroke-linecap="round" />
<path d="M685.5 400.8 l4.2 1.6 v3.2 q0 3.8 -4.2 5.6 q-4.2 -1.8 -4.2 -5.6 v-3.2z" stroke="#5a5fe0" stroke-width="1.1" fill="#e1e2fa" stroke-linejoin="round" stroke-linecap="round" />
<path d="M685.5 402 l3 1.2 v2.6 q0 2.8 -3 4.2z" stroke="none" stroke-width="0" fill="#b9bcf3" stroke-linejoin="round" stroke-linecap="round" />
<path d="M682 422.6 h4 l2.8 2.8 v5.6 h-6.8z" stroke="#d9363e" stroke-width="1.1" fill="#f9dcde" stroke-linejoin="round" stroke-linecap="round" />
<path d="M686 422.8 v2.6 h2.6" stroke="#d9363e" stroke-width="0.8" fill="none" stroke-linejoin="round" stroke-linecap="round" />
<path d="M680.6 424.6 a1.6 1.6 0 0 1 2.8 -0.8 a1.4 1.4 0 0 1 1.8 1.4 v1.4 h-4.6z" stroke="#d9363e" stroke-width="0.5" fill="#d9363e" stroke-linejoin="round" stroke-linecap="round" />
<path d="M683.4 428.6 h4" stroke="#d9363e" stroke-width="0.7" fill="none" stroke-linejoin="round" stroke-linecap="round" />
<path d="M681 433.2 h9.6" stroke="#d9363e" stroke-width="1.1" fill="none" stroke-linejoin="round" stroke-linecap="round" stroke-dasharray="1.4 1"/>
<path d="M680.4 453.8 l6.6 -6.6 l2.2 2.2 l-6.6 6.6 h-2.2z" stroke="#7b35c9" stroke-width="1.2" fill="#ead9f8" stroke-linejoin="round" stroke-linecap="round" />
<path d="M685 456.2 q1.6 -2.4 2.6 -0.8 q0.8 1.2 2.8 0.2" stroke="#7b35c9" stroke-width="1.2" fill="none" stroke-linejoin="round" stroke-linecap="round" />
<circle cx="686.6" cy="469" r="0.9" fill="#8a5cc9"/>
<path d="M683.4 474 l2.2 2.2 l2.2 -2.2" stroke="#666" stroke-width="1.0" fill="none" stroke-linejoin="round" stroke-linecap="round" />
<text x="681" y="477" font-size="8.3" fill="#b4b4b4" font-weight="normal" text-anchor="start" >Activate</text>
<line x1="678" y1="482" x2="693.5" y2="482" stroke="#dcdcdc" stroke-width="0.7" />
<text x="681" y="487.2" font-size="6.5" fill="#c6c6c6" font-weight="normal" text-anchor="start" >Go to Settings</text>
<path d="M684.2 489.8 v7 M686.4 493.3 h4 M688.6 491.4 l1.9 1.9 l-1.9 1.9" stroke="#444" stroke-width="1.2" fill="none" stroke-linejoin="round" stroke-linecap="round" />
</g>
<rect x="238" y="170.8" width="458.6" height="333.0" rx="3.2" fill="none" stroke="#d2d2d2" stroke-width="0.7"/>
<g transform="translate(-2.0,3.9)"><path d="M213.2 249 C225.1 292.1 251.5 290.5 262.4 293.3 L264.3 274.6 L295 303.4 L259.2 331.7 L259.2 317.9 C226.9 307.9 208.3 290.4 213.2 249 Z" fill="#fff"/></g>
<path d="M213.2 249 C225.1 292.1 251.5 290.5 262.4 293.3 L264.3 274.6 L295 303.4 L259.2 331.7 L259.2 317.9 C226.9 307.9 208.3 290.4 213.2 249 Z" fill="#ffa200"/>
<g transform="translate(-2.0,3.9)"><path d="M213.2 249 C225.1 292.1 251.5 290.5 262.4 293.3 L264.3 274.6 L295 303.4 L259.2 331.7 L259.2 317.9 C226.9 307.9 208.3 290.4 213.2 249 Z" fill="none" stroke="#111" stroke-width="1.2" stroke-linejoin="miter"/></g>
</svg>
</body></html>
